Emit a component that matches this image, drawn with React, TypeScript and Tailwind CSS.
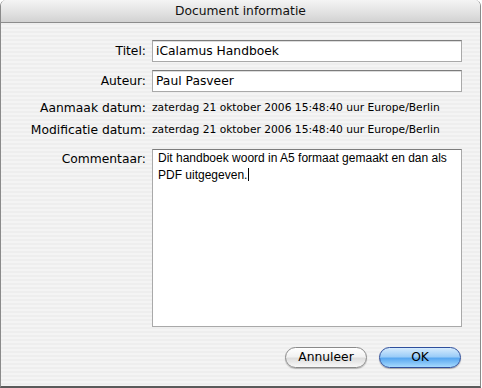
import React from "react";

const ui = "font-['DejaVu_Sans',sans-serif]";

function Label({ children }: { children: React.ReactNode }) {
  return <div className="w-[145px] shrink-0 text-right text-[12.3px] text-black">{children}</div>;
}

function Field({ value }: { value: string }) {
  return (
    <div className="flex h-[22px] w-[310px] items-center border border-[#a9a9a9] border-t-[#7c7c7c] bg-white pl-[3px] text-[12.3px] text-black shadow-[inset_0_1px_0_#dcdcdc]">
      {value}
    </div>
  );
}

export default function App() {
  const date = "zaterdag 21 oktober 2006 15:48:40 uur Europe/Berlin";

  return (
    <div className={`h-[388px] w-[482px] bg-white ${ui}`}>
      <div className="flex h-[388px] w-[481px] flex-col overflow-hidden rounded-t-[6px] border-x border-b-2 border-x-[#8a8a8a] border-b-[#5a5a5a]">
        {/* title bar */}
        <div className="flex h-[23px] shrink-0 items-center justify-center border-b border-[#8c8c8c] bg-[linear-gradient(to_bottom,#f4f4f4,#e4e4e4_50%,#d2d2d2)] text-[12.3px] text-[#111]">
          Document informatie
        </div>

        {/* body */}
        <div className="flex flex-1 flex-col bg-[repeating-linear-gradient(to_bottom,#eeeeee_0px,#eeeeee_2px,#f4f4f4_2px,#f4f4f4_4px)]">
          <div className="mt-[17px] flex items-center gap-[6px]">
            <Label>Titel:</Label>
            <Field value="iCalamus Handboek" />
          </div>
          <div className="mt-[8px] flex items-center gap-[6px]">
            <Label>Auteur:</Label>
            <Field value="Paul Pasveer" />
          </div>
          <div className="mt-[5px] flex h-[22px] items-center gap-[6px]">
            <Label>Aanmaak datum:</Label>
            <div className="text-[10.7px] text-black">{date}</div>
          </div>
          <div className="flex h-[22px] items-center gap-[6px]">
            <Label>Modificatie datum:</Label>
            <div className="text-[10.7px] text-black">{date}</div>
          </div>
          <div className="mt-[8px] flex items-start gap-[6px]">
            <div className="pt-[1px]">
              <Label>Commentaar:</Label>
            </div>
            <div className="h-[178px] w-[310px] border border-[#a9a9a9] border-t-[#7c7c7c] bg-white px-[5px] pt-[1px] font-['Liberation_Sans',sans-serif] text-[12px] leading-[15px] text-black">
              Dit handboek woord in A5 formaat gemaakt en dan als
              <br />
              PDF uitgegeven.
              <span className="ml-px inline-block h-[13px] w-px translate-y-[2px] bg-black" />
            </div>
          </div>

          {/* buttons */}
          <div className="mt-[20px] flex justify-end gap-[12px] pr-[19px]">
            <button className="h-[21px] w-[82px] rounded-full border border-[#8a8a8a] bg-[linear-gradient(to_bottom,#ffffff,#f2f2f2_45%,#dedede_55%,#f8f8f8)] text-[12.3px] text-black shadow-[0_1px_1px_rgba(0,0,0,0.25)]">
              Annuleer
            </button>
            <button className="h-[21px] w-[82px] rounded-full border border-[#2f4f9c] bg-[linear-gradient(to_bottom,#d6ebfd,#9ccdf8_45%,#5aa8f0_55%,#a6dafe)] text-[12.3px] text-black shadow-[0_1px_1px_rgba(0,0,0,0.3)]">
              OK
            </button>
          </div>
        </div>
      </div>
    </div>
  );
}
